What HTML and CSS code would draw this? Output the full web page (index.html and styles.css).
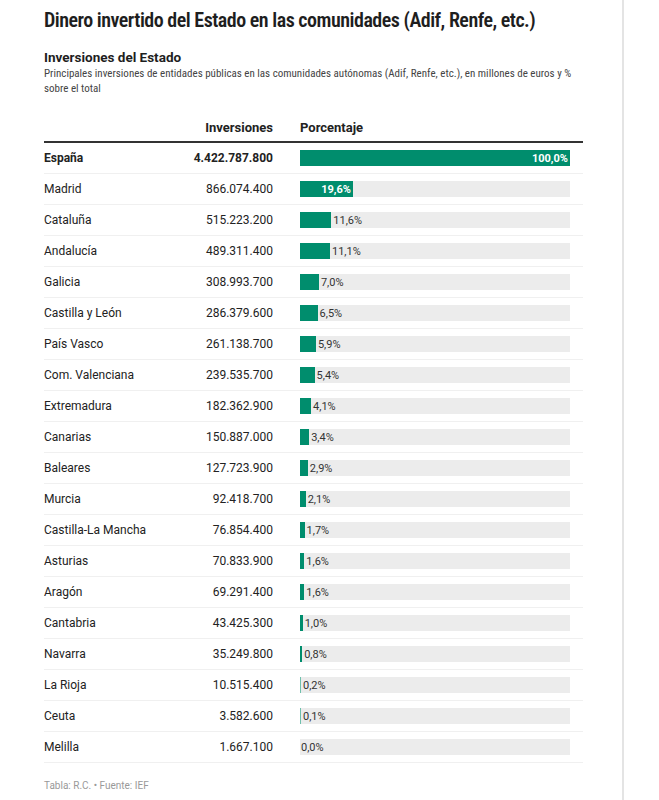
FILE: index.html
```html
<!DOCTYPE html>
<html lang="es">
<head>
<meta charset="utf-8">
<title>Dinero invertido del Estado</title>
<link rel="stylesheet" href="styles.css">
</head>
<body>
<div class="page">
  <h1 class="title">Dinero invertido del Estado en las comunidades (Adif, Renfe, etc.)</h1>
  <h2 class="subtitle">Inversiones del Estado</h2>
  <p class="desc">Principales inversiones de entidades públicas en las comunidades autónomas (Adif, Renfe, etc.), en millones de euros y % sobre el total</p>
  <div class="table">
    <div class="row head">
      <div class="c-name"></div>
      <div class="c-val">Inversiones</div>
      <div class="c-bar">Porcentaje</div>
    </div>
    <div class="row total">
      <div class="c-name">España</div>
      <div class="c-val">4.422.787.800</div>
      <div class="c-bar"><div class="track"><div class="fill in" style="width:100%"><span>100,0%</span></div></div></div>
    </div>
    <div class="row">
      <div class="c-name">Madrid</div>
      <div class="c-val">866.074.400</div>
      <div class="c-bar"><div class="track"><div class="fill in" style="width:19.6%"><span>19,6%</span></div></div></div>
    </div>
    <div class="row">
      <div class="c-name">Cataluña</div>
      <div class="c-val">515.223.200</div>
      <div class="c-bar"><div class="track"><div class="fill" style="width:11.6%"></div><span class="out">11,6%</span></div></div>
    </div>
    <div class="row">
      <div class="c-name">Andalucía</div>
      <div class="c-val">489.311.400</div>
      <div class="c-bar"><div class="track"><div class="fill" style="width:11.1%"></div><span class="out">11,1%</span></div></div>
    </div>
    <div class="row">
      <div class="c-name">Galicia</div>
      <div class="c-val">308.993.700</div>
      <div class="c-bar"><div class="track"><div class="fill" style="width:7.0%"></div><span class="out">7,0%</span></div></div>
    </div>
    <div class="row">
      <div class="c-name">Castilla y León</div>
      <div class="c-val">286.379.600</div>
      <div class="c-bar"><div class="track"><div class="fill" style="width:6.5%"></div><span class="out">6,5%</span></div></div>
    </div>
    <div class="row">
      <div class="c-name">País Vasco</div>
      <div class="c-val">261.138.700</div>
      <div class="c-bar"><div class="track"><div class="fill" style="width:5.9%"></div><span class="out">5,9%</span></div></div>
    </div>
    <div class="row">
      <div class="c-name">Com. Valenciana</div>
      <div class="c-val">239.535.700</div>
      <div class="c-bar"><div class="track"><div class="fill" style="width:5.4%"></div><span class="out">5,4%</span></div></div>
    </div>
    <div class="row">
      <div class="c-name">Extremadura</div>
      <div class="c-val">182.362.900</div>
      <div class="c-bar"><div class="track"><div class="fill" style="width:4.1%"></div><span class="out">4,1%</span></div></div>
    </div>
    <div class="row">
      <div class="c-name">Canarias</div>
      <div class="c-val">150.887.000</div>
      <div class="c-bar"><div class="track"><div class="fill" style="width:3.4%"></div><span class="out">3,4%</span></div></div>
    </div>
    <div class="row">
      <div class="c-name">Baleares</div>
      <div class="c-val">127.723.900</div>
      <div class="c-bar"><div class="track"><div class="fill" style="width:2.9%"></div><span class="out">2,9%</span></div></div>
    </div>
    <div class="row">
      <div class="c-name">Murcia</div>
      <div class="c-val">92.418.700</div>
      <div class="c-bar"><div class="track"><div class="fill" style="width:2.1%"></div><span class="out">2,1%</span></div></div>
    </div>
    <div class="row">
      <div class="c-name">Castilla-La Mancha</div>
      <div class="c-val">76.854.400</div>
      <div class="c-bar"><div class="track"><div class="fill" style="width:1.7%"></div><span class="out">1,7%</span></div></div>
    </div>
    <div class="row">
      <div class="c-name">Asturias</div>
      <div class="c-val">70.833.900</div>
      <div class="c-bar"><div class="track"><div class="fill" style="width:1.6%"></div><span class="out">1,6%</span></div></div>
    </div>
    <div class="row">
      <div class="c-name">Aragón</div>
      <div class="c-val">69.291.400</div>
      <div class="c-bar"><div class="track"><div class="fill" style="width:1.6%"></div><span class="out">1,6%</span></div></div>
    </div>
    <div class="row">
      <div class="c-name">Cantabria</div>
      <div class="c-val">43.425.300</div>
      <div class="c-bar"><div class="track"><div class="fill" style="width:1.0%"></div><span class="out">1,0%</span></div></div>
    </div>
    <div class="row">
      <div class="c-name">Navarra</div>
      <div class="c-val">35.249.800</div>
      <div class="c-bar"><div class="track"><div class="fill" style="width:0.8%"></div><span class="out">0,8%</span></div></div>
    </div>
    <div class="row">
      <div class="c-name">La Rioja</div>
      <div class="c-val">10.515.400</div>
      <div class="c-bar"><div class="track"><div class="fill thin" style="width:0.2%"></div><span class="out">0,2%</span></div></div>
    </div>
    <div class="row">
      <div class="c-name">Ceuta</div>
      <div class="c-val">3.582.600</div>
      <div class="c-bar"><div class="track"><div class="fill thin" style="width:0.1%"></div><span class="out">0,1%</span></div></div>
    </div>
    <div class="row">
      <div class="c-name">Melilla</div>
      <div class="c-val">1.667.100</div>
      <div class="c-bar"><div class="track"><span class="out zero">0,0%</span></div></div>
    </div>
  </div>
  <p class="foot">Tabla: R.C. • Fuente: IEF</p>
</div>
</body>
</html>
```

FILE: styles.css
```css
* { box-sizing: border-box; }
body { margin: 0; background: #fff; }
.page {
  width: 624px;
  min-height: 800px;
  border-right: 2px solid #e4e4e4;
  padding: 8px 0 0 44px;
  font-family: Roboto, "Liberation Sans", sans-serif;
  color: #1a1a1a;
}
.title {
  margin: 0;
  font-family: Roboto, "Open Sans", sans-serif;
  font-stretch: 75%;
  font-weight: 600;
  font-size: 20px;
  letter-spacing: -0.5px;
  line-height: 24px;
  color: #1e1e1e;
  white-space: nowrap;
}
.subtitle {
  margin: 16px 0 0;
  font-size: 13.5px;
  font-stretch: 97%;
  line-height: 18px;
  font-weight: 700;
  color: #1e1e1e;
}
.desc {
  margin: 0;
  width: 535px;
  font-size: 11px;
  font-stretch: 86%;
  line-height: 15px;
  color: #444;
}
.table {
  margin-top: 17px;
  width: 539px;
}
.row {
  display: grid;
  grid-template-columns: 103px 99px 270px;
  column-gap: 27px;
  align-items: center;
  height: 31px;
  border-bottom: 1px solid #f0f0f0;
  font-size: 12px;
  color: #222;
}
.row.head {
  height: 30px;
  border-bottom: 2px solid #333;
  font-weight: 700;
  font-size: 13px;
}
.row.total { font-weight: 700; }
.c-name { white-space: nowrap; }
.c-val { text-align: right; }
.track {
  display: flex;
  align-items: center;
  height: 16px;
  background: #ececec;
}
.fill {
  height: 16px;
  background: #008d6d;
  display: flex;
  align-items: center;
  justify-content: flex-end;
}
.fill.thin { background: #6fc0ac; min-width: 1px; }
.fill span {
  color: #fff;
  font-weight: 700;
  font-size: 11px;
  padding-right: 2px;
}
.out {
  margin-left: 2px;
  font-size: 11px;
  font-weight: 400;
  color: #333;
}
.out.zero { margin-left: 1px; }
.foot {
  margin: 16px 0 0;
  font-size: 10px;
  line-height: 14px;
  color: #999;
}
```
